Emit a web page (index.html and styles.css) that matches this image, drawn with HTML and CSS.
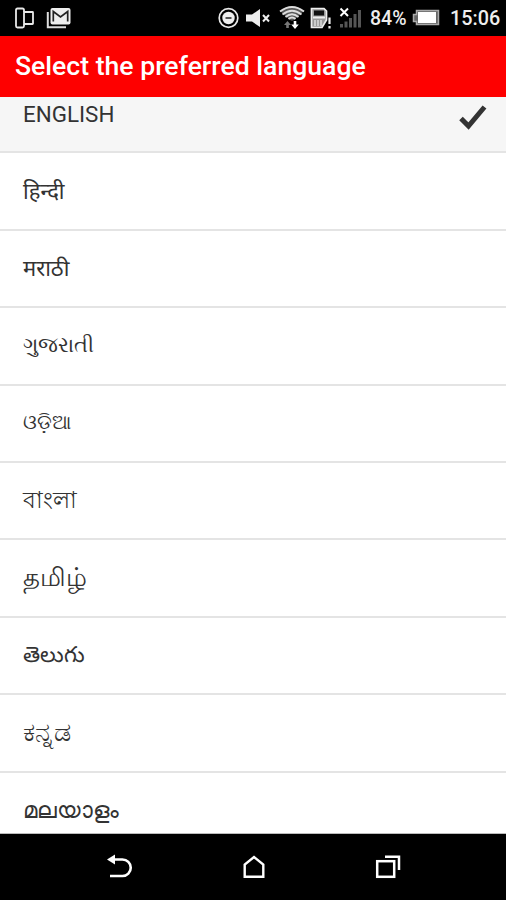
FILE: index.html
```html
<!DOCTYPE html>
<html lang="en">
<head>
  <meta charset="UTF-8">
  <meta name="viewport" content="width=device-width, initial-scale=1.0">
  <title>Select the preferred language</title>
  <link rel="stylesheet" href="styles.css">
</head>
<body>
  <div class="status-bar">
    <div class="status-left">
      <svg class="icon" width="20" height="24" viewBox="0 0 20 24" fill="none" stroke="#e8e8e8" stroke-width="1.8">
        <path d="M10 6V4Q10 2.500 8.500 2.500H3.500Q2 2.500 2 4V20Q2 21.500 3.500 21.500H8.500Q10 21.500 10 20V18"/>
        <rect x="10" y="6" width="9" height="12" rx="0.500"/>
      </svg>
      <svg class="icon" width="26" height="24" viewBox="0 0 26 24">
        <path d="M1.800 6V21.300H20" fill="none" stroke="#ddd" stroke-width="2"/>
        <rect x="4.500" y="2" width="20" height="16.500" rx="2" fill="#eee"/>
        <path d="M7.300 15.500V5.500L14.500 11L21.700 5.500V15.500" fill="none" stroke="#222" stroke-width="1.700"/>
      </svg>
    </div>
    <div class="status-right">
      <svg class="icon" width="22" height="24" viewBox="0 0 22 24">
        <circle cx="10.500" cy="12" r="9.300" fill="none" stroke="#e8e8e8" stroke-width="1.700"/>
        <circle cx="10.500" cy="12" r="6.200" fill="#eee"/>
        <path d="M7.500 12H13.500" stroke="#555" stroke-width="2"/>
      </svg>
      <svg class="icon mute" width="25" height="24" viewBox="0 0 25 24">
        <path d="M0 8.500H6L14 3V21L6 15.500H0Z" fill="#eee"/>
        <path d="M17 9L23 15.500M23 9L17 15.500" stroke="#eee" stroke-width="2"/>
      </svg>
      <svg class="icon wifi" width="26" height="24" viewBox="0 0 26 24">
        <path d="M1 5Q13 -4 25 5L15 14Q13 15.500 11 14Z" fill="#555"/>
        <g fill="none" stroke="#ddd" stroke-width="1.800">
          <path d="M1 5.500Q13 -3.500 25 5.500"/>
          <path d="M3.500 8.500Q13 1 22.500 8.500"/>
          <path d="M6.500 11Q13 5.500 19.500 11"/>
          <path d="M9.500 13Q13 10 16.500 13"/>
        </g>
        <path d="M8.500 15L12 19H9.800V22H7.200V19H5Z" fill="#777"/>
        <path d="M14.700 15H17.300V18.500H19.800L16 23L12.200 18.500H14.700Z" fill="#fff"/>
      </svg>
      <svg class="icon sd" width="22" height="24" viewBox="0 0 22 24">
        <path d="M1.500 2.500H14L16.500 5V14L12 21.500H1.500Z" fill="#999" stroke="#eee" stroke-width="1.700"/>
        <rect x="4" y="4.500" width="10" height="5" fill="#111"/>
        <path d="M3 11.500H15" stroke="#eee" stroke-width="2"/>
        <path d="M5 14V20M8 14V20M11 14V20" stroke="#eee" stroke-width="1.200"/>
        <path d="M19.500 11.500V18M19.500 20V22.500" stroke="#eee" stroke-width="2.200"/>
      </svg>
      <svg class="icon signal" width="24" height="24" viewBox="0 0 24 24">
        <g fill="#555">
          <rect x="1" y="18" width="3" height="3.500"/>
          <rect x="5.500" y="15.500" width="3" height="6"/>
          <rect x="10" y="12" width="3" height="9.500"/>
          <rect x="14.500" y="8" width="3" height="13.500"/>
          <rect x="19" y="4" width="3" height="17.500"/>
        </g>
        <path d="M1.500 2.500L9 10M9 2.500L1.500 10" stroke="#fff" stroke-width="2"/>
      </svg>
      <span class="percent">84%</span>
      <svg class="icon battery" width="28" height="24" viewBox="0 0 28 24">
        <path d="M4.500 4.500H26.500V18.500H4.500V15.500H1.500V8.500H4.500Z" fill="#666" stroke="#aaa" stroke-width="1.500"/>
        <rect x="6" y="6" width="18" height="11" fill="#fff"/>
      </svg>
      <span class="clock">15:06</span>
    </div>
  </div>

  <header class="title-bar">
    <h1>Select the preferred language</h1>
  </header>

  <main class="list-view">
    <ul class="languages">
      <li class="language selected">
        <span>ENGLISH</span>
        <svg class="check" width="28" height="26" viewBox="0 0 28 26">
          <path d="M2 14.500L9.500 22L25.500 3" fill="none" stroke="#333" stroke-width="5"/>
        </svg>
      </li>
      <li class="language" lang="hi"><span>हिन्दी</span></li>
      <li class="language" lang="mr"><span>मराठी</span></li>
      <li class="language gujarati" lang="gu"><span>ગુજરાતી</span></li>
      <li class="language odia" lang="or"><span>ଓଡ଼ିଆ</span></li>
      <li class="language bengali" lang="bn"><span>বাংলা</span></li>
      <li class="language tamil" lang="ta"><span>தமிழ்</span></li>
      <li class="language telugu" lang="te"><span>తెలుగు</span></li>
      <li class="language kannada" lang="kn"><span>ಕನ್ನಡ</span></li>
      <li class="language malayalam" lang="ml"><span>മലയാളം</span></li>
    </ul>
  </main>

  <nav class="nav-bar">
    <svg width="26" height="26" viewBox="0 0 26 26">
      <path d="M7 5.500H15.500A8 8 0 0 1 15.500 22H3" fill="none" stroke="#fff" stroke-width="2.600"/>
      <path d="M0 5.500L8 0.500V10.500Z" fill="#fff"/>
    </svg>
    <svg width="26" height="26" viewBox="0 0 26 26">
      <path d="M3.700 22.700V10.500L13 3L22.300 10.500V22.700Z" fill="none" stroke="#fff" stroke-width="2.400"/>
    </svg>
    <svg width="26" height="26" viewBox="0 0 26 26" fill="none" stroke="#fff" stroke-width="2.500">
      <rect x="2.200" y="7.200" width="17" height="15.600"/>
      <path d="M10 2.700H24V16"/>
    </svg>
  </nav>
</body>
</html>
```
FILE: styles.css
```css
* {
  box-sizing: border-box;
}
body {
  margin: 0;
  height: 900px;
  display: flex;
  flex-direction: column;
  overflow: hidden;
  background-color: #fff;
  font-family: Roboto, "Noto Sans", sans-serif;
}
.status-bar {
  height: 36px;
  flex: none;
  display: flex;
  justify-content: space-between;
  padding: 0 6px 0 14px;
  background-color: #000;
  color: #eee;
}
.status-left,
.status-right {
  display: flex;
  align-items: center;
}
.status-left {
  gap: 12px;
}
.icon {
  display: block;
  flex: none;
}
.mute {
  margin-left: 6px;
}
.wifi {
  margin-left: 8px;
}
.sd {
  margin-left: 5px;
}
.signal {
  margin-left: 7px;
}
.percent,
.clock {
  font-size: 20px;
  font-weight: 500;
  line-height: 36px;
  padding-top: 2px;
}
.percent {
  width: 37px;
  margin-left: 7px;
  font-size: 19.5px;
}
.battery {
  margin-left: 5px;
}
.clock {
  width: 50px;
  margin-left: 10px;
  font-size: 19.8px;
}
.title-bar {
  height: 61px;
  flex: none;
  padding-left: 15px;
  background-color: #fe0000;
}
.title-bar h1 {
  margin: 0;
  font-size: 26.6px;
  font-weight: 500;
  line-height: 60px;
  color: #fff;
  white-space: nowrap;
}
.list-view {
  height: 737px;
  flex: none;
  overflow: hidden;
  border-bottom: 1px solid #bbb;
}
/* the list is scrolled down a little, the first row is cut off */
.languages {
  list-style: none;
  margin: -21px 0 0;
  padding: 0;
}
.language {
  height: 77.4px;
  display: flex;
  justify-content: space-between;
  align-items: center;
  padding: 0 19px 2px 23px;
  border-bottom: 2px solid #e4e4e4;
  font-size: 22px;
  color: #333;
}
.selected {
  background-color: #f6f6f6;
  font-size: 22.4px;
}
.selected span {
  padding-top: 2px;
}
.check {
  margin-top: 9px;
}
/* the scripts run at different sizes, this evens them out */
.gujarati {
  font-size: 20.5px;
}
.odia {
  font-size: 20px;
}
.bengali {
  padding-top: 4px;
  font-size: 23.3px;
}
.tamil {
  padding-top: 3px;
  font-size: 25.7px;
}
.telugu {
  padding-top: 7px;
}
.kannada {
  font-size: 27px;
}
.malayalam {
  padding-top: 2px;
  font-size: 23px;
}
.nav-bar {
  flex: 1;
  display: flex;
  justify-content: space-between;
  align-items: center;
  padding: 0 105px 0 107px;
  background-color: #000;
}
```
